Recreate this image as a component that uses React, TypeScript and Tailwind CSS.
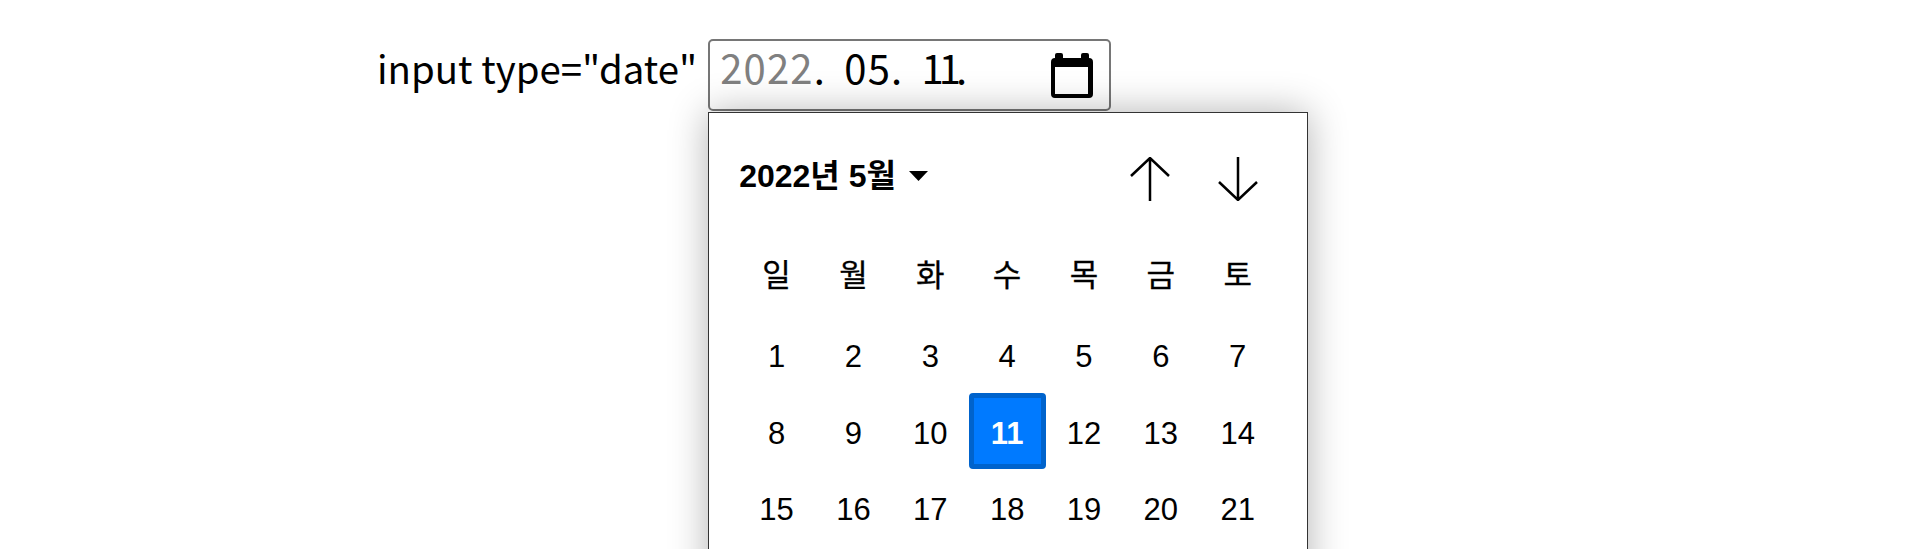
import React from "react";

const WEEKDAYS = ["일", "월", "화", "수", "목", "금", "토"];
const DAYS = Array.from({ length: 21 }, (_, index) => index + 1);
const SELECTED_DAY = 11;

const CalendarIcon = () => (
  <svg width="42" height="45" viewBox="0 0 42 45" className="block">
    <path
      fillRule="evenodd"
      fill="#000"
      d="M6 0h4a2 2 0 0 1 2 2v3h18V2a2 2 0 0 1 2-2h4a2 2 0 0 1 2 2v3a4 4 0 0 1 4 4v32a4 4 0 0 1-4 4H4a4 4 0 0 1-4-4V9a4 4 0 0 1 4-4V2a2 2 0 0 1 2-2zM4 14v27h33V14z"
    />
  </svg>
);

const ArrowIcon = ({ down = false }: { down?: boolean }) => (
  <svg width="40" height="44" viewBox="0 0 40 44" fill="none" stroke="#000" strokeWidth="2.5" className="block">
    {down ? <path d="M20 0v43M1 25l19 18 19-18" /> : <path d="M20 44V1M1 19L20 1l19 18" />}
  </svg>
);

const DatePopup = () => (
  <div className="absolute left-[-2px] top-[71px] w-[600px] h-[640px] border border-[#333] bg-white shadow-[0_0_36px_rgba(0,0,0,0.3)] [font-family:'Liberation_Sans','Noto_Sans_CJK_KR',sans-serif] text-[31px] leading-[36px] text-black">
    <div className="flex items-center justify-between h-[125px] pl-[30px] pr-[49px]">
      <div className="flex items-center gap-[13px]">
        <span className="font-bold text-[32px]">2022년 5월</span>
        <svg width="19" height="10" viewBox="0 0 19 10" className="block">
          <path d="M0 0h19L9.5 10z" fill="#000" />
        </svg>
      </div>
      <div className="flex items-center gap-[48px] mt-[6px]">
        <ArrowIcon />
        <ArrowIcon down />
      </div>
    </div>
    <div className="grid grid-cols-7 w-[538px] ml-[29px] [-webkit-text-stroke:0.3px_#000]">
      {WEEKDAYS.map((day) => (
        <div key={day} className="flex items-center justify-center h-[76px]">
          {day}
        </div>
      ))}
    </div>
    <div className="grid grid-cols-7 w-[538px] ml-[29px] mt-[2px]">
      {DAYS.map((day) => (
        <div
          key={day}
          className={`flex items-center justify-center h-[76.7px] pt-[5px] rounded-[4px] ${
            day === SELECTED_DAY ? "bg-[#007aff] border-[5px] border-[#0063cc] text-white font-bold" : ""
          }`}
        >
          {day}
        </div>
      ))}
    </div>
  </div>
);

export default function App() {
  return (
    <div className="h-screen overflow-hidden bg-white pt-[39px] pl-[377px] [font-family:'Noto_Sans_CJK_KR',sans-serif] text-[40px] leading-[56px] text-black">
      <div className="flex items-center gap-[11px]">
        <label className="whitespace-nowrap text-[38.4px] -translate-y-[8px]">input type="date"</label>
        <div className="relative flex items-center justify-between w-[403px] h-[72px] pl-[10px] pr-[16px] border-2 border-[#767676] rounded-[5px]">
          <span className="whitespace-pre tracking-[1.2px] [word-spacing:8px] -translate-y-[8px]">
            <span className="text-[#808080]">2022</span>. 05. <span className="tracking-[-5px]">11</span>.
          </span>
          <CalendarIcon />
          <DatePopup />
        </div>
      </div>
    </div>
  );
}
